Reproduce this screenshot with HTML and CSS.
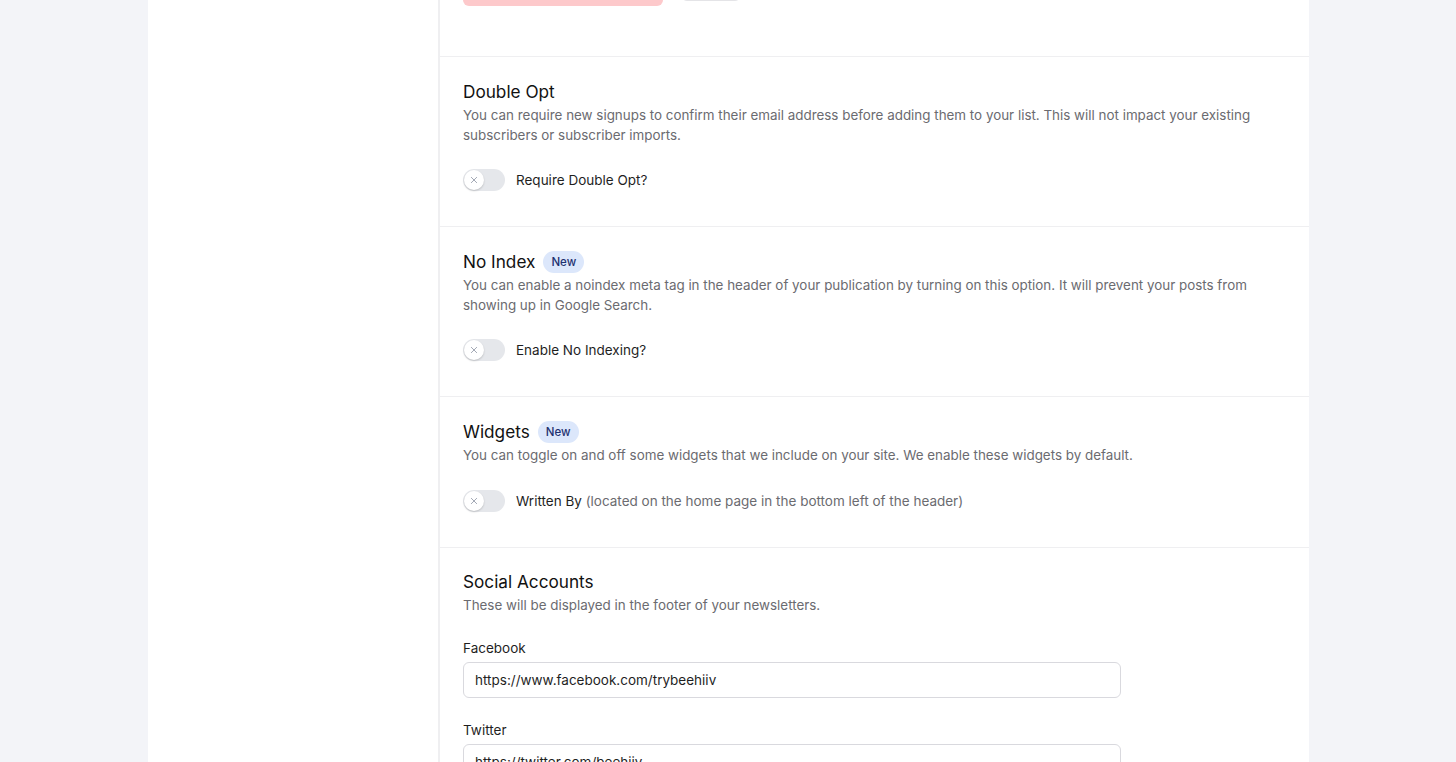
FILE: index.html
```html
<!DOCTYPE html>
<html lang="en">
<head>
<meta charset="utf-8">
<title>Publication Settings</title>
<link rel="stylesheet" href="styles.css">
</head>
<body>
<div class="frame">
  <div class="card">
    <aside class="sidebar"></aside>
    <main class="panel">
      <section class="block block-top">
        <div class="actions">
          <button class="btn btn-danger" type="button" aria-label="Delete publication"></button>
          <button class="btn btn-ghost" type="button" aria-label="Cancel"></button>
        </div>
      </section>

      <section class="block">
        <h2 class="block-title">Double Opt</h2>
        <p class="block-desc">You can require new signups to confirm their email address before adding them to your list. This will not impact your existing subscribers or subscriber imports.</p>
        <label class="toggle-row">
          <span class="switch"><span class="knob"><svg viewBox="0 0 12 12" width="8" height="8"><path d="M2 2l8 8M10 2l-8 8" stroke="#9ca3af" stroke-width="1.4" stroke-linecap="round" fill="none"/></svg></span></span>
          <span class="toggle-label">Require Double Opt?</span>
        </label>
      </section>

      <section class="block">
        <h2 class="block-title">No Index <span class="badge">New</span></h2>
        <p class="block-desc">You can enable a noindex meta tag in the header of your publication by turning on this option. It will prevent your posts from showing up in Google Search.</p>
        <label class="toggle-row">
          <span class="switch"><span class="knob"><svg viewBox="0 0 12 12" width="8" height="8"><path d="M2 2l8 8M10 2l-8 8" stroke="#9ca3af" stroke-width="1.4" stroke-linecap="round" fill="none"/></svg></span></span>
          <span class="toggle-label">Enable No Indexing?</span>
        </label>
      </section>

      <section class="block">
        <h2 class="block-title">Widgets <span class="badge">New</span></h2>
        <p class="block-desc">You can toggle on and off some widgets that we include on your site. We enable these widgets by default.</p>
        <label class="toggle-row">
          <span class="switch"><span class="knob"><svg viewBox="0 0 12 12" width="8" height="8"><path d="M2 2l8 8M10 2l-8 8" stroke="#9ca3af" stroke-width="1.4" stroke-linecap="round" fill="none"/></svg></span></span>
          <span class="toggle-label">Written By <span class="muted">(located on the home page in the bottom left of the header)</span></span>
        </label>
      </section>

      <section class="block block-last">
        <h2 class="block-title">Social Accounts</h2>
        <p class="block-desc">These will be displayed in the footer of your newsletters.</p>
        <div class="field">
          <label class="field-label" for="fb">Facebook</label>
          <input class="input" id="fb" type="text" value="https://www.facebook.com/trybeehiiv">
        </div>
        <div class="field">
          <label class="field-label" for="tw">Twitter</label>
          <input class="input" id="tw" type="text" value="https://twitter.com/beehiiv">
        </div>
      </section>
    </main>
  </div>
</div>
</body>
</html>
```

FILE: styles.css
```css
* { box-sizing: border-box; }

html, body {
  margin: 0;
  padding: 0;
  height: 100%;
  overflow: hidden;
}

body {
  background: #f3f4f8;
  font-family: Inter, "Noto Sans", "Liberation Sans", sans-serif;
  color: #111111;
}

.frame {
  display: flex;
  justify-content: center;
  padding-left: 1px;
}

.card {
  width: 1161px;
  display: flex;
  background: #ffffff;
  min-height: 100vh;
}

.sidebar {
  width: 292px;
  flex: none;
  border-right: 2px solid #efeff1;
}

.panel {
  flex: 1;
  display: flex;
  flex-direction: column;
  margin-top: -30px;
}

.block {
  padding: 21px 23px 34px;
  border-bottom: 1px solid #efeff1;
}

.block-top {
  padding: 0 23px 50px;
}

.block-last {
  padding-top: 20px;
  border-bottom: none;
}

.actions {
  display: flex;
  align-items: flex-start;
  gap: 18px;
}

.btn {
  font: inherit;
  border-radius: 6px;
  padding: 0;
  cursor: pointer;
}

.btn-danger {
  width: 200px;
  height: 36px;
  border: none;
  background: #fdc9cb;
}

.btn-ghost {
  width: 60px;
  height: 31px;
  background: #ffffff;
  border: 1px solid #e4e4e7;
}

.block-title {
  margin: 0;
  display: flex;
  align-items: center;
  gap: 8px;
  font-size: 17.2px;
  font-weight: 400;
  line-height: 28px;
  color: #111111;
}

.badge {
  display: inline-flex;
  align-items: center;
  height: 22px;
  padding: 0 8px;
  border-radius: 11px;
  background: #dce7fb;
  color: #1e3170;
  font-size: 11.5px;
  font-weight: 500;
}

.block-desc {
  margin: 0;
  font-size: 13.4px;
  line-height: 19.5px;
  color: #6b6b70;
  max-width: 823px;
}

.toggle-row {
  margin-top: 23px;
  display: flex;
  align-items: center;
  gap: 11px;
  height: 24px;
}

.switch {
  width: 42px;
  height: 22px;
  border-radius: 11px;
  background: #e5e7eb;
  position: relative;
  flex: none;
}

.knob {
  position: absolute;
  left: 1px;
  top: 1px;
  width: 20px;
  height: 20px;
  border-radius: 50%;
  background: #ffffff;
  box-shadow: 0 1px 2px rgba(0, 0, 0, 0.18);
  display: flex;
  align-items: center;
  justify-content: center;
}

.toggle-label {
  font-size: 13.5px;
  color: #1f1f1f;
}

.muted {
  color: #6b6b70;
}

.field {
  margin-top: 23px;
  display: flex;
  flex-direction: column;
}

.field + .field {
  margin-top: 22px;
}

.field-label {
  font-size: 13.5px;
  line-height: 20px;
  color: #1f1f1f;
  margin-bottom: 4px;
}

.input {
  width: 658px;
  height: 36px;
  padding: 0 11px;
  border: 1px solid #d9d9de;
  border-radius: 6px;
  font: inherit;
  font-size: 13.5px;
  color: #1f1f1f;
  background: #ffffff;
  outline: none;
}
```
